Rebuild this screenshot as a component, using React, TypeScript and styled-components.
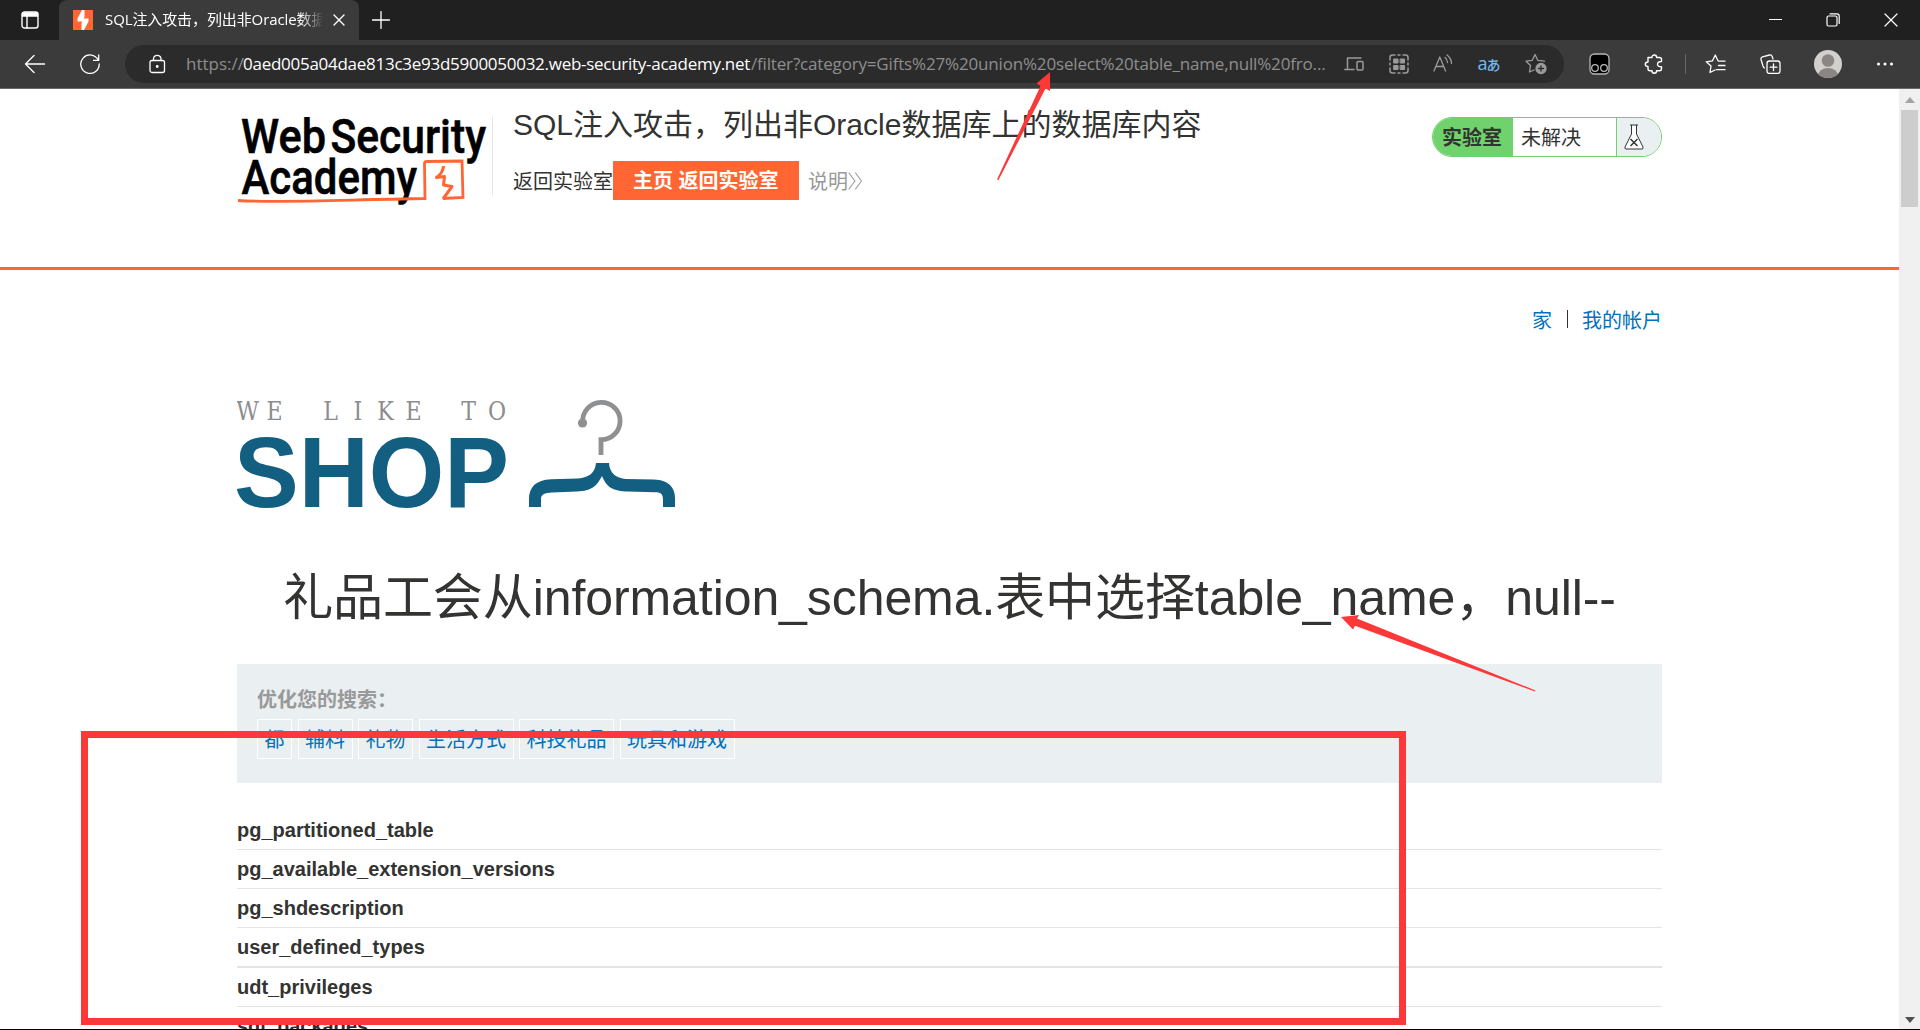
import React from 'react';
import styled, { createGlobalStyle } from 'styled-components';

const ui = `'Open Sans', 'Noto Sans CJK SC', sans-serif`;
const body = `'Liberation Sans', 'Noto Sans CJK SC', sans-serif`;
const accent = '#ff6633';
const marker = '#fc3838';

const Global = createGlobalStyle`
  * { box-sizing: border-box; }
  html, body { margin: 0; height: 1030px; overflow: hidden; background: #fff; }
  svg { display: block; flex: none; }
`;

const Window = styled.div`
  position: relative;
  display: flex;
  flex-direction: column;
  width: 1920px;
  height: 1030px;
  overflow: hidden;
  border-bottom: 1px solid #000;
  font-family: ${body};
  color: #333332;
`;

/* ---------- browser chrome ---------- */

const TabStrip = styled.div`
  display: flex;
  align-items: center;
  height: 40px;
  flex: none;
  background: #202020;
`;

const Slot = styled.div<{ $w: number }>`
  display: flex;
  align-items: center;
  justify-content: center;
  width: ${p => p.$w}px;
  height: 40px;
  flex: none;
`;

const Tab = styled.div`
  display: flex;
  align-items: center;
  width: 300px;
  height: 40px;
  padding: 0 14px;
  flex: none;
  background: #3b3b3b;
  border-radius: 8px 8px 0 0;
`;

const TabTitle = styled.div`
  width: 218px;
  margin: 0 11px 2px 12px;
  overflow: hidden;
  white-space: nowrap;
  font: 15px/22px ${ui};
  letter-spacing: -0.1px;
  color: #fff;
  mask-image: linear-gradient(90deg, #000 195px, transparent 218px);
`;

const WindowButtons = styled.div`
  display: flex;
  align-items: center;
  gap: 44px;
  margin-left: auto;
  padding-right: 22px;
`;

const Toolbar = styled.div`
  display: flex;
  align-items: center;
  height: 49px;
  flex: none;
  padding: 0 8px 0 24px;
  background: #3b3b3b;
  border-bottom: 1px solid #6a6a6a;
`;

const Reload = styled.div`
  margin-left: 35px;
`;

const AddressBar = styled.div`
  display: flex;
  align-items: center;
  width: 1439px;
  height: 38px;
  margin: 0 8px 0 25px;
  padding: 0 17px 0 24px;
  border-radius: 19px;
  background: #2b2b2b;
`;

const Url = styled.div`
  display: flex;
  width: 1140px;
  margin-left: 20px;
  white-space: pre;
  font: 17px/24px ${ui};
`;

const UrlPart = styled.span<{ $w: number; $spacing: number; $strong?: boolean }>`
  width: ${p => p.$w}px;
  flex: none;
  letter-spacing: ${p => p.$spacing}px;
  color: ${p => (p.$strong ? '#fff' : '#8e8e8e')};
`;

const PageActions = styled.div`
  display: flex;
  flex: 1;
  align-items: center;
  justify-content: space-between;
  margin-left: 18px;
`;

const Translate = styled.span`
  width: 23px;
  padding-bottom: 2px;
  white-space: nowrap;
  font: 500 18px/20px ${ui};
  letter-spacing: -1px;
  color: #76b9ed;
  small { font: 500 14px/20px 'Noto Sans CJK JP', sans-serif; }
`;

const ToolIcons = styled.div`
  display: flex;
  flex: 1;
  align-items: center;
`;

const Divider = styled.div<{ $h: number; $color: string }>`
  width: 1px;
  height: ${p => p.$h}px;
  background: ${p => p.$color};
`;

/* ---------- page ---------- */

const Viewport = styled.div`
  display: flex;
  flex: 1;
  min-height: 0;
`;

const Page = styled.div`
  display: flex;
  flex: 1;
  flex-direction: column;
  overflow: hidden;
  background: #fff;
`;

const Scrollbar = styled.div`
  display: flex;
  flex-direction: column;
  align-items: center;
  width: 21px;
  padding: 8px 0 6px;
  background: #f0f0f0;
`;

const Thumb = styled.div`
  width: 17px;
  height: 97px;
  margin: 7px 0 auto;
  background: #cdcdcd;
`;

const Container = styled.div`
  width: 1425px;
  margin: 0 auto;
`;

const Header = styled.header`
  height: 181px;
  flex: none;
  border-bottom: 3px solid ${accent};
`;

const HeaderRow = styled(Container)`
  display: flex;
  align-items: flex-start;
`;

const LogoCell = styled.div`
  display: flex;
  align-items: flex-start;
  width: 256px;
  margin: 28px 20px 0 0;
`;

const TitleCell = styled.div`
  flex: 1;
  padding-top: 15px;
`;

const LabTitle = styled.h2`
  margin: 0;
  font-size: 30px;
  line-height: 42px;
  font-weight: 400;
  white-space: nowrap;
`;

const LinkRow = styled.div`
  display: flex;
  align-items: center;
  height: 39px;
  margin-top: 15px;
  font-size: 20px;
`;

const HomeButton = styled.a`
  height: 39px;
  width: 186px;
  padding-left: 20px;
  line-height: 41px;
  font-weight: 700;
  white-space: nowrap;
  color: #fff;
  background: ${accent};
`;

const Description = styled.a`
  display: flex;
  align-items: center;
  margin-left: 9px;
  color: #999;
`;

const Status = styled.div`
  display: flex;
  width: 230px;
  height: 40px;
  margin-top: 28px;
  border: 1px solid #70d26d;
  border-radius: 20px;
  overflow: hidden;
  font-size: 20px;
  line-height: 40px;
`;

const StatusLabel = styled.div`
  width: 80px;
  padding-left: 9px;
  font-weight: 700;
  background: #70d26d;
`;

const StatusText = styled.div`
  flex: 1;
  padding-left: 8px;
`;

const StatusIcon = styled.div`
  display: flex;
  align-items: center;
  width: 45px;
  padding-left: 7px;
  border-left: 1px solid #70d26d;
  background: #eaeff2;
`;

const AccountNav = styled.nav`
  display: flex;
  align-items: center;
  justify-content: flex-end;
  gap: 14.5px;
  height: 30px;
  margin-top: 34px;
  font-size: 20px;
  a { color: #0071bc; }
`;

const ShopLogo = styled.div`
  margin-top: 62px;
  height: 120px;
`;

const Heading = styled.h1`
  margin: 52px 0 0;
  height: 96px;
  font-size: 50px;
  line-height: 61px;
  font-weight: 400;
  letter-spacing: -0.085px;
  text-align: center;
  white-space: nowrap;
`;

const Filter = styled.section`
  height: 119px;
  padding: 20px;
  background: #eaeff2;
`;

const FilterTitle = styled.div`
  height: 35px;
  font-size: 20px;
  line-height: 32px;
  font-weight: 700;
  color: #999;
`;

const Tags = styled.div`
  display: flex;
  gap: 5.5px;
`;

const Tag = styled.a`
  height: 40px;
  padding: 0 6.5px;
  border: 1px solid #fff;
  font-size: 20px;
  line-height: 40px;
  color: #0071bc;
`;

const Table = styled.div`
  margin-top: 28px;
`;

const Row = styled.div<{ $rule?: number }>`
  height: ${p => 38 + (p.$rule ?? 1)}px;
  border-bottom: ${p => p.$rule ?? 1}px solid #e4e4e4;
  font-size: 20px;
  line-height: 38px;
  font-weight: 700;
`;

/* ---------- annotations drawn over the window ---------- */

const MarkerBox = styled.div`
  position: absolute;
  left: 81px;
  top: 731px;
  width: 1325px;
  height: 294px;
  border: 7px solid ${marker};
`;

const MarkerLayer = styled.svg`
  position: absolute;
  inset: 0;
`;

const Icon = ({ w = 20, h = 20, color = '#fff', sw = 1.3, children }: {
  w?: number; h?: number; color?: string; sw?: number; children: React.ReactNode;
}) => (
  <svg width={w} height={h} viewBox={`0 0 ${w} ${h}`} fill="none" stroke={color} strokeWidth={sw}
    strokeLinecap="round" strokeLinejoin="round">{children}</svg>
);

const AcademyLogo = () => (
  <svg width="256" height="90" viewBox="0 0 256 90" fill="none">
    <g fill="#000" stroke="#000" strokeWidth=".6" fontFamily="Roboto, sans-serif" fontWeight="500" fontSize="47.5">
      <text x="4" y="36" textLength="85" lengthAdjust="spacingAndGlyphs">Web</text>
      <text x="93.500" y="36" textLength="155.500" lengthAdjust="spacingAndGlyphs">Security</text>
      <text x="4.500" y="77" textLength="175.500" lengthAdjust="spacingAndGlyphs">Academy</text>
    </g>
    <path d="M1 83.500C40 86 100 83 188 81.500L187.500 46.500Q187.500 44.500 190 44.500L225 44L226 80.500L206 81.500" stroke={accent} strokeWidth="2.800" />
    <path d="M206 82L215 69.500L206.500 68L207.500 59.500L199.500 60.500Q206 56 206.500 49" stroke={accent} strokeWidth="3" strokeLinejoin="round" />
    <path d="M255.500 0V78" stroke="#e4e4e4" />
  </svg>
);

/* The tagline is set wide: every letter is centred on its own stop. */
const taglineStops = [10.5, 37.5, 65, 93.5, 121, 148.5, 176.5, 204, 231.5, 260].map(x => x / 0.85).join(' ');

const HangerLogo = () => (
  <svg width="450" height="120" viewBox="0 0 450 120" fill="none">
    <text transform="scale(.85 1)" x={taglineStops} y="23.500" textAnchor="middle" fill="#8c8d8e"
      fontFamily="'DejaVu Serif', serif" fontSize="26">WE LIKE TO</text>
    <text x="-3" y="111" fill="#125f82" fontFamily="'Liberation Sans', sans-serif" fontWeight="700" fontSize="100" textLength="275" lengthAdjust="spacingAndGlyphs">SHOP</text>
    <path d="M345.700 26A18.700 18.700 0 1 1 364 43.700V59" stroke="#8f9092" strokeWidth="4.800" />
    <circle cx="345.500" cy="27" r="4.600" fill="#8f9092" />
    <path d="M359 67H372C372.500 77 379 82 389 83L417 83.500C432 84 438 92 438 102V111H426V104C426 97 423 96.500 418 96.300L391 95.500C376 95 370 92 365 80C359 91 355 94.500 340 95.500L315 96.500C308 97 304 98 304 103V111H292V103C292 91 299 84 314 83.300L341 82.500C352 81.500 358 77 359 67Z" fill="#125f82" />
  </svg>
);

const rows: [string, number?][] = [
  ['pg_partitioned_table'],
  ['pg_available_extension_versions'],
  ['pg_shdescription'],
  ['user_defined_types', 2],
  ['udt_privileges'],
  ['sql_packages'],
];

const tags = ['都', '辅料', '礼物', '生活方式', '科技礼品', '玩具和游戏'];

const gray = '#9b9b9b';

export default function App() {
  return (
    <Window>
      <Global />
      <TabStrip>
        <Slot $w={59}>
          <Icon w={18} h={18} sw={1.4}>
            <rect x="1" y="1" width="16" height="16" rx="2.500" />
            <path d="M1.500 2H16.500V5H1.500Z" fill="#fff" />
            <path d="M6 5V17" />
          </Icon>
        </Slot>
        <Tab>
          <svg width="20" height="20" viewBox="0 0 20 20">
            <rect width="20" height="20" fill={accent} />
            <path d="M9 0H11.500V7L10.500 8.500H15.500V11.500L11 20H8.500V13L9.500 11.500H4.500V8.500Z" fill="#fff" />
          </svg>
          <TabTitle>SQL注入攻击，列出非Oracle数据库</TabTitle>
          <Icon w={12} h={12} sw={1.4}><path d="M1 1L11 11M11 1L1 11" /></Icon>
        </Tab>
        <Slot $w={43}>
          <Icon w={18} h={18} sw={1.3}><path d="M9 .5V17.500M.5 9H17.500" /></Icon>
        </Slot>
        <WindowButtons>
          <Icon w={13} h={14} sw={1.2}><path d="M0 6.500H13" /></Icon>
          <Icon w={14} h={14} sw={1.2}>
            <rect x="1" y="3" width="10" height="10" rx="1.500" />
            <path d="M4 .8H11Q13.200 .8 13.200 3V10.500" />
          </Icon>
          <Icon w={14} h={14} sw={1.2}><path d="M1 1L13 13M13 1L1 13" /></Icon>
        </WindowButtons>
      </TabStrip>

      <Toolbar>
        <Icon w={21}><path d="M20.500 10H1.500M10 1.500L1.500 10L10 18.500" /></Icon>
        <Reload>
          <Icon>
            <path d="M18.200 6A9.200 9.200 0 1 0 19.200 10M18.700 1V6.300H13.500" />
          </Icon>
        </Reload>
        <AddressBar>
          <Icon w={17} h={20}>
            <rect x="1" y="6.500" width="14.500" height="12" rx="2" />
            <path d="M4.500 6.500V4.500A3.800 3.800 0 0 1 12 4.500V6.500" />
            <circle cx="8.200" cy="12.500" r=".8" fill="#fff" />
          </Icon>
          <Url>
            <UrlPart $w={57} $spacing={0}>https://</UrlPart>
            <UrlPart $w={508} $spacing={-0.27} $strong>0aed005a04dae813c3e93d5900050032.web-security-academy.net</UrlPart>
            <UrlPart $w={575} $spacing={-0.17}>/filter?category=Gifts%27%20union%20select%20table_name,null%20fro...</UrlPart>
          </Url>
          <PageActions>
            <Icon color={gray} sw={1.5}>
              <path d="M3.500 14V4H17M.8 15.500H10" /><rect x="13" y="7.500" width="6" height="8.500" rx="1" />
            </Icon>
            <Icon color={gray} sw={1.5}>
              <path d="M1 6V3.500Q1 1 3.500 1H6M9 1H11M14 1H16.500Q19 1 19 3.500V6M19 9V11M19 14V16.500Q19 19 16.500 19H14M11 19H9M6 19H3.500Q1 19 1 16.500V14M1 11V9" />
              <path d="M5 5H9V9H5ZM11.500 5H15.500V9H11.500ZM5 11.500H9V15.500H5ZM11.500 11.500H15.500V15.500H11.500Z" fill={gray} strokeWidth="1" />
            </Icon>
            <Icon color={gray}>
              <path d="M1 17L6.800 3L12.600 17M3 12.500H10.600M12 3.500Q14.500 5.500 14.500 8.500M14 1Q18.500 4.500 18.500 9.500" />
            </Icon>
            <Translate>a<small>あ</small></Translate>
            <Icon w={22} h={22} color={gray}>
              <path d="M9 17L4.500 19L5.500 12.500L1 8.200L7.300 7.300L10 1.500L12.800 7.300L19.500 8.200" />
              <circle cx="16" cy="15.500" r="5" fill={gray} /><path d="M16 13V18M13.500 15.500H18.500" stroke="#2b2b2b" />
            </Icon>
          </PageActions>
        </AddressBar>
        <ToolIcons>
          <Slot $w={54}>
            <Icon w={21} h={22} color="#b8b8b8">
              <rect x="1" y="1" width="19" height="20" rx="4.500" fill="#000" />
              <circle cx="6" cy="15" r="3.300" /><circle cx="15" cy="15" r="3.300" />
            </Icon>
          </Slot>
          <Slot $w={56}>
            <Icon sw={1.4}>
              <path d="M4 3.500H8Q8 1 10.300 1Q12.600 1 12.600 3.500H15.500Q17.500 3.500 17.500 5.500V7.500Q13.500 7.300 13.500 10.300Q13.500 13 17.500 12.800V14.800Q17.500 16.800 15.500 16.800H12.600Q12.600 19.300 10.300 19.300Q8 19.300 8 16.800H6Q4 16.800 4 14.800V12.500Q1.300 12.500 1.300 10.200Q1.300 8 4 8Z" />
            </Icon>
          </Slot>
          <Slot $w={6}><Divider $h={20} $color="#666" /></Slot>
          <Slot $w={54}>
            <Icon w={21}>
              <path d="M10 16L5 18.500L6 12L1.200 7.800L7.500 6.800L10.300 1L13 6.800L14.500 7.200M13.500 7.200H20M13.500 11.500H20M11.500 15.700H20" />
            </Icon>
          </Slot>
          <Slot $w={56}>
            <Icon w={21}>
              <path d="M4.500 14Q3.500 13.500 3 12L1 5.500Q.6 3.500 2.500 2.900L9.500 1Q11.500 .6 12.200 2.500L13 5" />
              <rect x="7" y="7" width="13" height="12.500" rx="2.500" /><path d="M13.500 10V16.500M10.200 13.200H16.800" />
            </Icon>
          </Slot>
          <Slot $w={60}>
            <svg width="28" height="28" viewBox="0 0 28 28">
              <defs><clipPath id="avatar"><circle cx="14" cy="14" r="14" /></clipPath></defs>
              <g clipPath="url(#avatar)">
                <rect width="28" height="28" fill="#d2d0cd" />
                <circle cx="14" cy="10.500" r="6.300" fill="#8b8683" />
                <ellipse cx="14" cy="26" rx="10" ry="8" fill="#8b8683" />
              </g>
            </svg>
          </Slot>
          <Slot $w={54}>
            <Icon w={22}><g fill="#fff" stroke="none"><circle cx="4.500" cy="10" r="1.500" /><circle cx="11" cy="10" r="1.500" /><circle cx="17.500" cy="10" r="1.500" /></g></Icon>
          </Slot>
        </ToolIcons>
      </Toolbar>

      <Viewport>
        <Page>
          <Header>
            <HeaderRow>
              <LogoCell><AcademyLogo /></LogoCell>
              <TitleCell>
                <LabTitle>SQL注入攻击，列出非Oracle数据库上的数据库内容</LabTitle>
                <LinkRow>
                  返回实验室
                  <HomeButton>主页 返回实验室</HomeButton>
                  <Description>
                    说明
                    <Icon w={15} color="#999" sw={1.1}><path d="M1 2L7 10L1 18M7.500 2L13.500 10L7.500 18" /></Icon>
                  </Description>
                </LinkRow>
              </TitleCell>
              <Status>
                <StatusLabel>实验室</StatusLabel>
                <StatusText>未解决</StatusText>
                <StatusIcon>
                  <svg width="20" height="26" viewBox="0 0 20 26" fill="#fff" stroke="#333332" strokeWidth="1">
                    <path d="M6 1H14M7.500 1V10L1 23Q.5 25 2 25H18Q19.500 25 19 23L12.500 10V1" />
                    <path d="M6.500 15L13.500 22M13.500 15L6.500 22" strokeWidth="1.500" />
                  </svg>
                </StatusIcon>
              </Status>
            </HeaderRow>
          </Header>
          <Container>
            <AccountNav><a>家</a><Divider $h={18} $color="#333" /><a>我的帐户</a></AccountNav>
            <ShopLogo><HangerLogo /></ShopLogo>
            <Heading>礼品工会从information_schema.表中选择table_name，null--</Heading>
            <Filter>
              <FilterTitle>优化您的搜索：</FilterTitle>
              <Tags>{tags.map(t => <Tag key={t}>{t}</Tag>)}</Tags>
            </Filter>
            <Table>{rows.map(([name, rule]) => <Row key={name} $rule={rule}>{name}</Row>)}</Table>
          </Container>
        </Page>
        <Scrollbar>
          <svg width="10" height="6" viewBox="0 0 10 6"><path d="M0 6L5 0L10 6Z" fill="#a3a3a3" /></svg>
          <Thumb />
          <svg width="10" height="6" viewBox="0 0 10 6"><path d="M0 0H10L5 6Z" fill="#505050" /></svg>
        </Scrollbar>
      </Viewport>

      <MarkerBox />
      <MarkerLayer width="1920" height="1030" viewBox="0 0 1920 1030" fill={marker}>
        <path d="M1050 72L1036.500 83.500L1040.500 86L997 179.500L998.500 180L1045.500 88.500L1050 91Z" />
        <path d="M1341 617L1359 615L1357 618.500L1535.500 690.500L1535 691.500L1355 625.800L1353 629.500Z" />
      </MarkerLayer>
    </Window>
  );
}
